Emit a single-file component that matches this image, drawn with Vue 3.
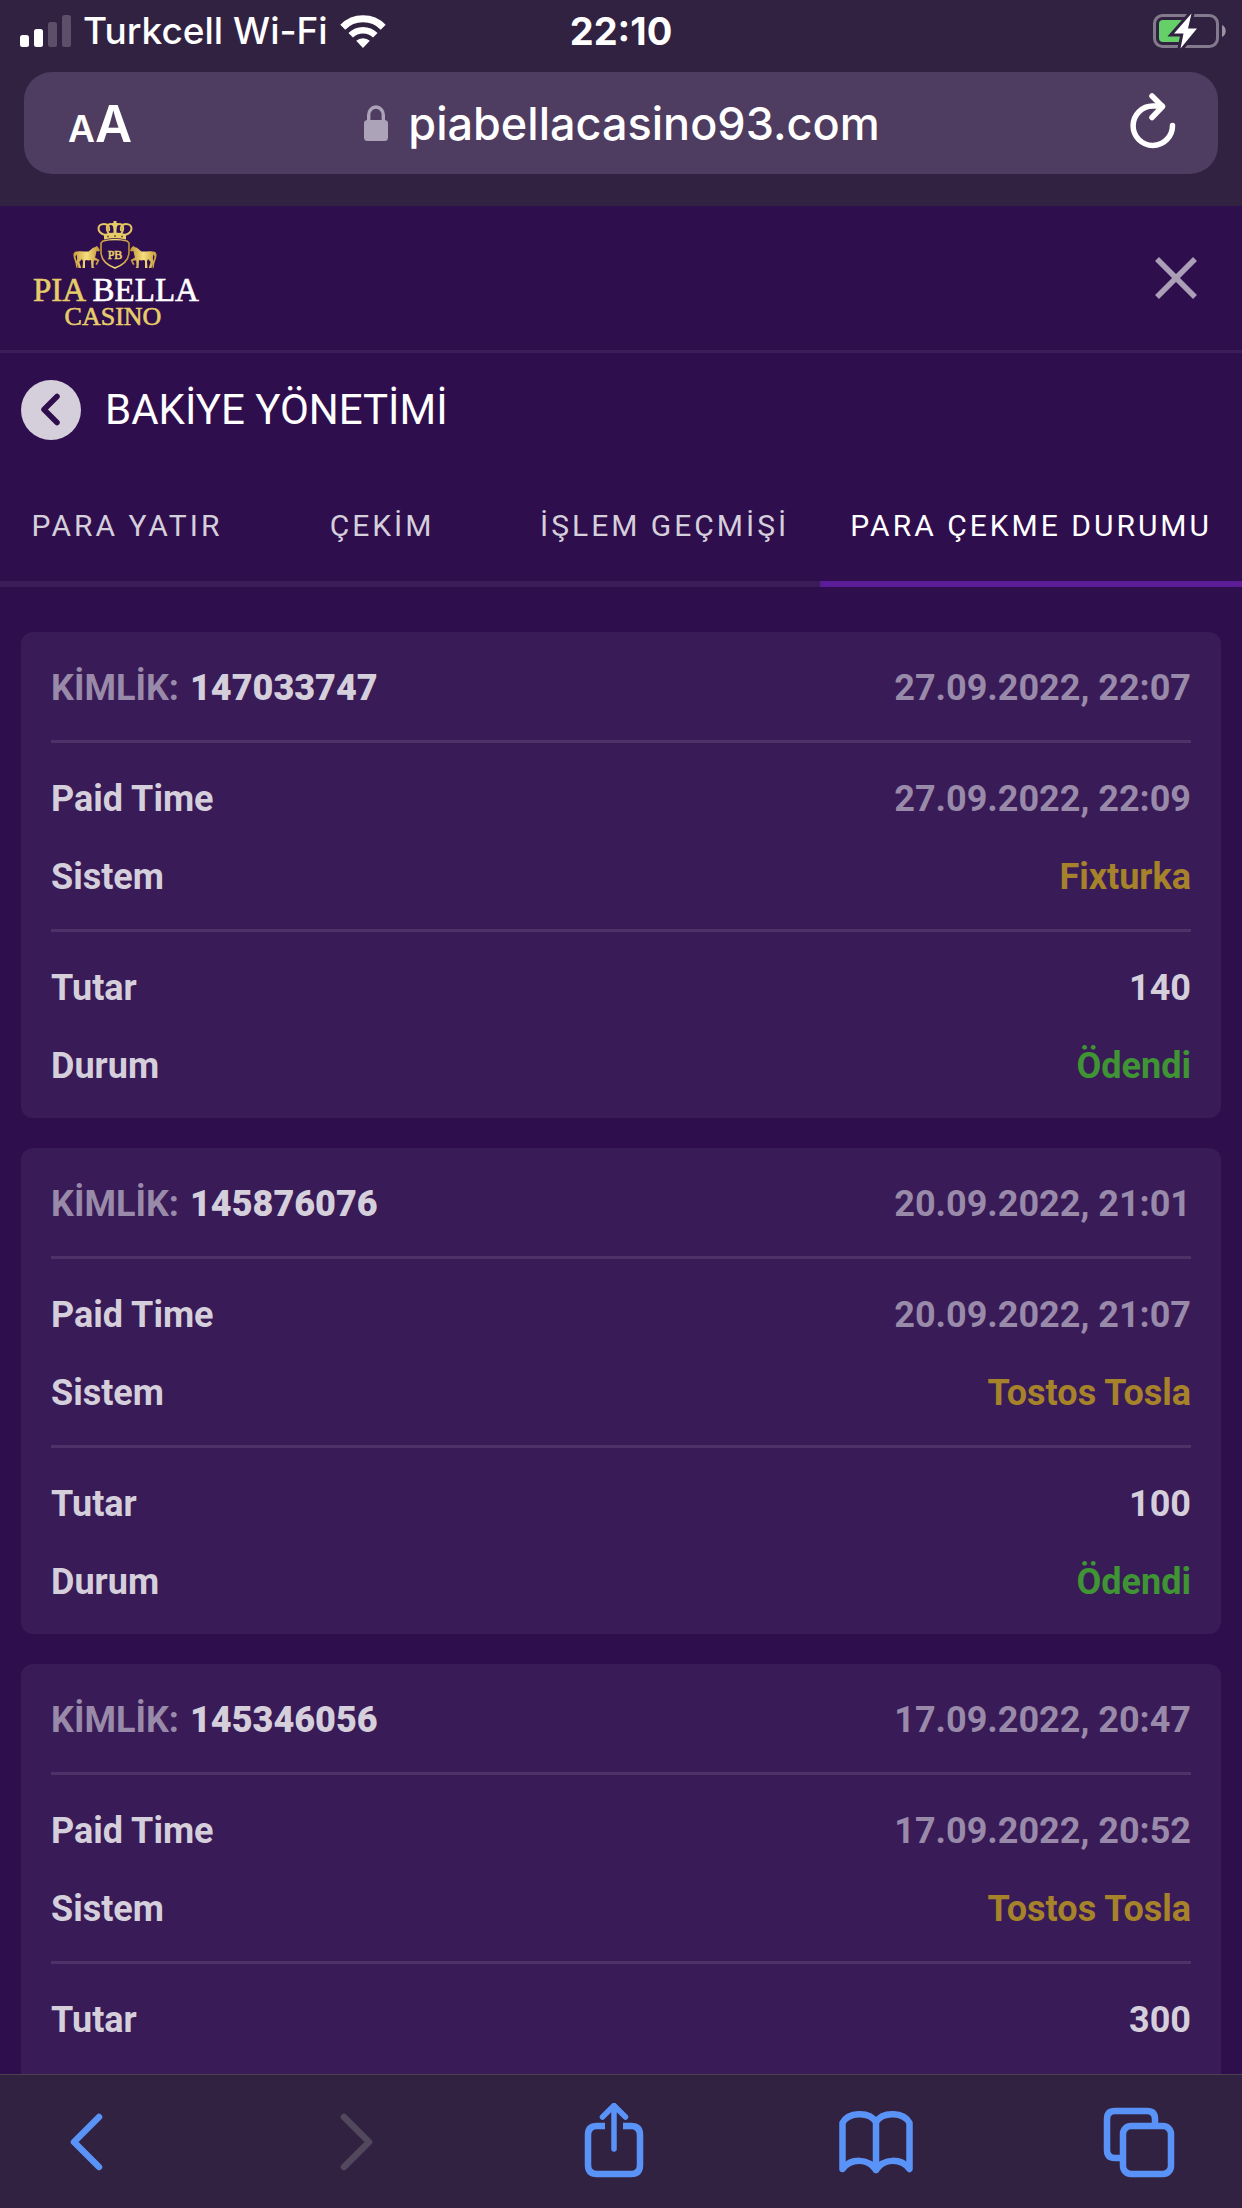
<template>
  <div class="screen">
    <header class="browser-top">
      <div class="status-bar">
        <div class="carrier">
          <svg class="signal" viewBox="0 0 51 32" width="51" height="32">
            <rect x="0" y="20" width="9" height="12" rx="2.5" fill="#fff" />
            <rect x="14" y="14" width="9" height="18" rx="2.5" fill="#fff" />
            <rect x="28" y="7" width="9" height="25" rx="2.5" fill="#5d4f6a" />
            <rect x="42" y="0" width="9" height="32" rx="2.5" fill="#5d4f6a" />
          </svg>
          <span>Turkcell Wi-Fi</span>
          <svg class="wifi" viewBox="0 0 46 33" width="46" height="33">
            <path d="M2.8 12.2a28.5 28.5 0 0 1 40.4 0" fill="none" stroke="#fff" stroke-width="7" />
            <path d="M10.7 20.3a17.4 17.4 0 0 1 24.6 0" fill="none" stroke="#fff" stroke-width="6.4" />
            <path d="M23 33l-6.8-7.2a10 10 0 0 1 13.6 0z" fill="#fff" />
          </svg>
        </div>
        <time class="clock">22:10</time>
        <svg class="battery" viewBox="0 0 74 36" width="74" height="36">
          <rect x="2.5" y="2.5" width="63" height="31" rx="8" fill="none" stroke="#847a8e" stroke-width="3" />
          <path d="M70 12c5 2 5 10 0 12z" fill="#9a91a3" />
          <rect x="7" y="7" width="25" height="22" rx="4" fill="#65d067" />
          <path d="M39.500.5L22 20.500h9.500L28.500 35.500 45 15.500h-9z" fill="#fff" stroke="#322242" stroke-width="6" paint-order="stroke" />
        </svg>
      </div>

      <div class="address-bar">
        <button class="plain text-size" aria-label="Metin boyutu"><small>A</small>A</button>
        <div class="address">
          <svg viewBox="0 0 24 36" width="24" height="36">
            <rect x="0" y="15" width="24" height="21" rx="3.5" fill="#ada3b8" />
            <path d="M4.700 16V10a7.300 8 0 0 1 14.600 0v6" fill="none" stroke="#ada3b8" stroke-width="3.400" />
          </svg>
          <span>piabellacasino93.com</span>
        </div>
        <button class="plain reload" aria-label="Yenile">
          <svg viewBox="0 0 46 60" width="46" height="60" fill="none" stroke="#fff" stroke-width="5.5" stroke-linecap="round" stroke-linejoin="round">
            <path d="M42.500 32.500A19.700 19.700 0 1 1 23 13h9" />
            <path d="M22 3l10.500 10.500L22 24.500" />
          </svg>
        </button>
      </div>
    </header>

    <main class="page">
      <div class="brand-bar">
        <a class="logo" href="#" aria-label="Pia Bella Casino">
          <svg viewBox="0 0 170 114" width="170" height="114">
            <defs>
              <linearGradient id="gold" x1="0" x2="1">
                <stop offset="0" stop-color="#c89a3c" />
                <stop offset=".5" stop-color="#f5df7c" />
                <stop offset="1" stop-color="#c08f38" />
              </linearGradient>
              <path id="horse" d="M23.500 0L22 1.200C19 1.500 18 4 15.500 5.500 12 6 8 4.500 4.500 5.500 1.500 5 0 7 .5 10c.5 4 2.500 6 2.500 11l1.300 1.500C5 18 3 14 2.500 10.500l1.300-2c.2 3 .7 4-.3 7L5.500 22h2.700l-1.900-6 2.700-3 1 2.500-.5 6.500h2.500v-7l1-1c2 .5 3.500.5 5 0l.5 8h3l-1-1.500.3-6c1.500 0 2.700 0 3.500.5l-1.800 3.300 1.500.7 2.500-5-4.500-2.500c1-2 .7-4.500 1.700-6.500l2.300.5 1-1.500-2-3z" />
            </defs>
            <g fill="url(#gold)">
              <use href="#horse" x="43" y="25" />
              <use href="#horse" transform="translate(127 25) scale(-1 1)" />
            </g>
            <path d="M73 20q12-3 24 0l2 2v9c0 8-6 13-14 16-8-3-14-8-14-16v-9z" fill="none" stroke="url(#gold)" stroke-width="1.600" />
            <g fill="none" stroke="#e3c561" stroke-width="2">
              <path d="M75 14C66 11 67 3 74 3c4 0 6 3 5 7M95 14c9-3 8-11 1-11-4 0-6 3-5 7" />
              <path d="M79 13c-4-6-2-10 2-10 3 0 4 3 4 9M91 13c4-6 2-10-2-10-3 0-4 3-4 9" />
            </g>
            <path d="M74 13q11-3 22 0v5.500q-11-3-22 0zM83.500 0h3v12h-3zM82 2h6v2h-6z" fill="#e6cd6a" />
            <path d="M77 15.500h2M84 15h2M91 15.500h2" stroke="#7a5528" stroke-width="1.500" />
            <g class="wordmark">
              <text x="85" y="38" font-size="12" text-anchor="middle">PB</text>
              <text x="3" y="80" font-size="33">PIA <tspan class="bella">BELLA</tspan></text>
              <text x="83" y="104" font-size="26" text-anchor="middle">CASINO</text>
            </g>
          </svg>
        </a>
        <button class="plain close" aria-label="Kapat">
          <svg viewBox="0 0 42 42" width="42" height="42" stroke="#ab9fb8" stroke-width="5.5">
            <path d="M2 2l38 38M40 2L2 40" />
          </svg>
        </button>
      </div>

      <div class="title-row">
        <button class="plain back" aria-label="Geri">
          <svg viewBox="0 0 60 60" width="60" height="60">
            <circle cx="30" cy="30" r="30" fill="#d5cfdc" />
            <path d="M36 16.500L23 29.500l13 13" fill="none" stroke="#2f0e4e" stroke-width="5.5" stroke-linecap="round" stroke-linejoin="round" />
          </svg>
        </button>
        <h1>BAKİYE YÖNETİMİ</h1>
      </div>

      <nav class="tabs">
        <button
          v-for="tab in tabs"
          :key="tab"
          class="plain tab"
          :class="{ active: tab === activeTab }"
          @click="activeTab = tab"
        >{{ tab }}</button>
      </nav>

      <section class="list">
        <article v-for="item in withdrawals" :key="item.id" class="card">
          <div class="group">
            <div class="row">
              <span class="dim">KİMLİK: <b>{{ item.id }}</b></span>
              <span class="dim">{{ item.created }}</span>
            </div>
          </div>
          <div class="group">
            <div class="row"><span>Paid Time</span><span class="dim">{{ item.paid }}</span></div>
            <div class="row"><span>Sistem</span><span class="system">{{ item.system }}</span></div>
          </div>
          <div class="group">
            <div class="row"><span>Tutar</span><span>{{ item.amount }}</span></div>
            <div class="row"><span>Durum</span><span class="paid">{{ item.status }}</span></div>
          </div>
        </article>
      </section>
    </main>

    <footer class="browser-bottom">
      <button class="plain" aria-label="Önceki sayfa">
        <svg viewBox="0 0 74 76" width="74" height="76">
          <path d="M50 14L25 39l25 25" />
        </svg>
      </button>
      <button class="plain" aria-label="Sonraki sayfa" disabled>
        <svg viewBox="0 0 74 76" width="74" height="76">
          <path d="M32 14l25 25-25 25" />
        </svg>
      </button>
      <button class="plain" aria-label="Paylaş">
        <svg viewBox="0 0 74 76" width="74" height="76">
          <path d="M29 23h-8q-9 0-9 9v30q0 9 9 9h34q9 0 9-9V32q0-9-9-9h-8" stroke-linecap="butt" />
          <path d="M38 46V2.500M26.500 14L38 2.500 49.500 14" stroke-width="5.5" />
        </svg>
      </button>
      <button class="plain" aria-label="Yer imleri">
        <svg viewBox="0 0 74 76" width="74" height="76">
          <path d="M37 19C30 8 9 9 3.500 20v46C12 55 29 55 37 67c8-12 25-12 33.500-1V20C65 9 44 8 37 19zv48" />
        </svg>
      </button>
      <button class="plain" aria-label="Sekmeler">
        <svg viewBox="0 0 74 76" width="74" height="76">
          <path d="M19 55h-6q-8 0-8-8V16q0-8 8-8h32q8 0 8 8v7" stroke-linecap="butt" />
          <rect x="21" y="23" width="48" height="48" rx="8" />
        </svg>
      </button>
    </footer>
  </div>
</template>

<script setup>
import { ref } from 'vue';

const tabs = ['PARA YATIR', 'ÇEKİM', 'İŞLEM GEÇMİŞİ', 'PARA ÇEKME DURUMU'];
const activeTab = ref('PARA ÇEKME DURUMU');

const withdrawals = ref([
  { id: '147033747', created: '27.09.2022, 22:07', paid: '27.09.2022, 22:09', system: 'Fixturka', amount: 140, status: 'Ödendi' },
  { id: '145876076', created: '20.09.2022, 21:01', paid: '20.09.2022, 21:07', system: 'Tostos Tosla', amount: 100, status: 'Ödendi' },
  { id: '145346056', created: '17.09.2022, 20:47', paid: '17.09.2022, 20:52', system: 'Tostos Tosla', amount: 300, status: 'Ödendi' },
]);
</script>

<style>
body {
  margin: 0;
  background: #2f0e4e;
}
</style>

<style scoped>
.screen {
  display: flex;
  flex-direction: column;
  height: 100vh;
  background: #2f0e4e;
  color: #d5cfdc;
  font-family: Roboto, "Liberation Sans", sans-serif;
}

.plain {
  margin: 0;
  padding: 0;
  border: 0;
  background: none;
  color: inherit;
  font: inherit;
  cursor: pointer;
}

svg {
  display: block;
  flex: none;
}

/* Browser chrome */
.browser-top {
  flex: none;
  padding-bottom: 32px;
  background: #322242;
  color: #fff;
  font-family: Inter, "Liberation Sans", sans-serif;
  font-weight: 500;
}

.status-bar {
  display: grid;
  grid-template-columns: 1fr auto 1fr;
  align-items: center;
  height: 60px;
  padding: 0 16px;
  font-size: 37px;
  line-height: 62px;
}

.carrier {
  display: flex;
  align-items: center;
  gap: 12px;
  padding-left: 4px;
}

.clock {
  font-size: 38px;
  font-weight: 700;
}

.battery {
  justify-self: end;
}

.address-bar {
  display: grid;
  grid-template-columns: 1fr auto 1fr;
  align-items: center;
  height: 102px;
  margin: 12px 24px 0;
  padding: 0 42px 0 44px;
  border-radius: 28px;
  background: #4f3c61;
}

.text-size {
  justify-self: start;
  font-size: 51px;
  font-weight: 600;
}

.text-size small {
  font-size: 37px;
}

.address {
  display: flex;
  align-items: center;
  gap: 20px;
  font-size: 45px;
}

.reload {
  justify-self: end;
}

/* Page header */
.page {
  flex: 1;
  min-height: 0;
  overflow-y: auto;
  scrollbar-width: none;
}

.brand-bar {
  display: flex;
  align-items: center;
  justify-content: space-between;
  height: 144px;
  padding: 0 45px 0 30px;
  border-bottom: 3px solid #3a1d58;
}

.logo {
  font-family: "Liberation Serif", serif;
}

.wordmark {
  fill: #e6cd6a;
  stroke: #e6cd6a;
  stroke-width: 0.6;
}

.bella {
  fill: #fff;
  stroke: #fff;
}

.title-row {
  display: flex;
  align-items: center;
  gap: 24px;
  padding: 26px 21px;
}

h1 {
  margin: 0;
  color: #fff;
  font-size: 42px;
  font-weight: 400;
  line-height: 62px;
}

.back {
  height: 60px;
}

.tabs {
  display: flex;
  justify-content: space-between;
  margin-top: -2px;
  box-shadow: inset 0 -6px #3a1d58;
}

.tab {
  min-width: 254px;
  padding: 6px 30px 0;
  border-bottom: 6px solid transparent;
  font-size: 30px;
  letter-spacing: 3px;
  line-height: 110px;
}

.tab.active {
  border-color: #5a1c97;
  color: #fff;
}

/* Withdrawal cards */
.list {
  display: grid;
  gap: 30px;
  padding: 45px 21px;
}

.card {
  padding: 0 30px;
  border-radius: 12px;
  background: #391b58;
  font-size: 36px;
  font-weight: 700;
}

.group {
  padding: 17px 0 13px;
}

.group + .group {
  border-top: 3px solid #4d3268;
}

.row {
  display: flex;
  justify-content: space-between;
  line-height: 78px;
}

.dim {
  color: #998aaa;
}

.dim b {
  margin-left: 2px;
  color: #d5cfdc;
}

.system {
  color: #a6832a;
}

.paid {
  color: #3f9434;
}

/* Bottom toolbar */
.browser-bottom {
  display: flex;
  flex: none;
  justify-content: space-between;
  box-sizing: border-box;
  height: 134px;
  padding: 28px 66px 29px 49px;
  border-top: 1px solid #4a434f;
  background: #322242;
  color: #5a93f8;
}

.browser-bottom svg {
  fill: none;
  stroke: currentColor;
  stroke-width: 6.5;
  stroke-linecap: round;
  stroke-linejoin: round;
}

.browser-bottom button:disabled {
  color: #52485d;
}
</style>
